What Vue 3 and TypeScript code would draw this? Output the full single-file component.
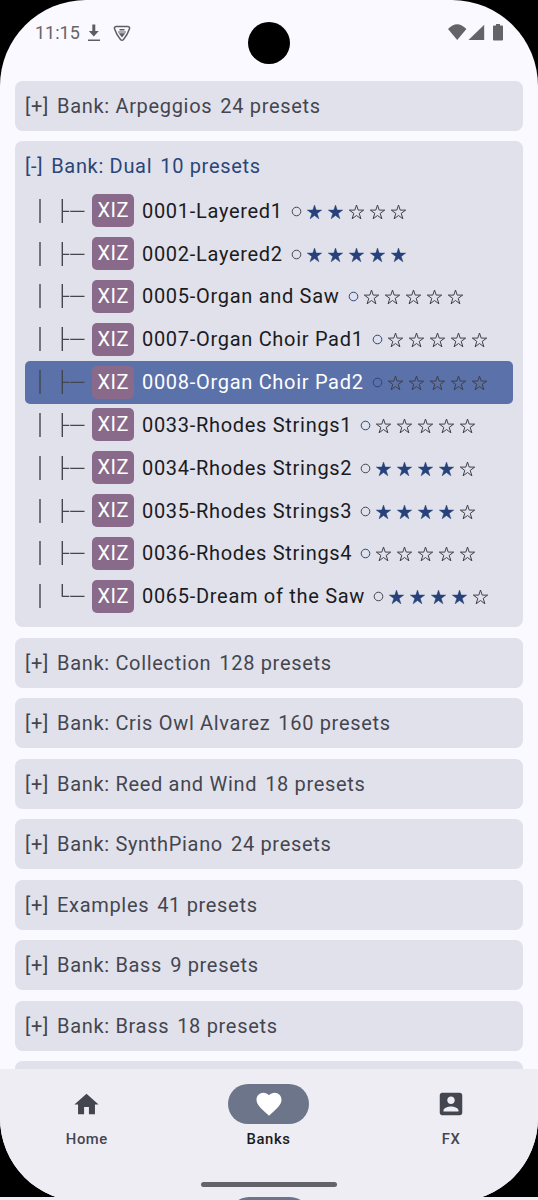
<script setup lang="ts">
interface Preset { name: string; stars: number; blue?: boolean; selected?: boolean }
interface Bank { name: string; count: number; presets?: Preset[] }

const banks: Bank[] = [
  { name: 'Bank: Arpeggios', count: 24 },
  {
    name: 'Bank: Dual', count: 10, presets: [
      { name: '0001-Layered1', stars: 2 },
      { name: '0002-Layered2', stars: 5 },
      { name: '0005-Organ and Saw', stars: 0, blue: true },
      { name: '0007-Organ Choir Pad1', stars: 0, blue: true },
      { name: '0008-Organ Choir Pad2', stars: 0, blue: true, selected: true },
      { name: '0033-Rhodes Strings1', stars: 0, blue: true },
      { name: '0034-Rhodes Strings2', stars: 4 },
      { name: '0035-Rhodes Strings3', stars: 4 },
      { name: '0036-Rhodes Strings4', stars: 0, blue: true },
      { name: '0065-Dream of the Saw', stars: 4 },
    ],
  },
  { name: 'Bank: Collection', count: 128 },
  { name: 'Bank: Cris Owl Alvarez', count: 160 },
  { name: 'Bank: Reed and Wind', count: 18 },
  { name: 'Bank: SynthPiano', count: 24 },
  { name: 'Examples', count: 41 },
  { name: 'Bank: Bass', count: 9 },
  { name: 'Bank: Brass', count: 18 },
]
</script>

<template>
  <div class="stage">
    <div class="phone">
      <header class="status">
        <span class="time">11:15</span>
        <svg class="dl" width="14" height="18" viewBox="0 0 14 18">
          <path d="M5.300 0.500h3v6.500h3.500L6.800 12.500 1.800 7h3.500z" fill="#5e5e62" />
          <path d="M1 16.200h12" stroke="#5e5e62" stroke-width="1.500" />
        </svg>
        <svg class="shield" width="18" height="17" viewBox="0 0 18 17">
          <path d="M3 1.500h12q2.200.3 1.400 2.600Q14.500 10 10.500 14.500q-1.500 1.600-3 0Q3.500 10 1.600 4.100.8 1.800 3 1.500z" fill="none" stroke="#5e5e62" stroke-width="1.500" />
          <path d="M6.500 4h5v1.500h-5zM5 6.500h8v1H5zM5.700 8.300h6.600L9 12.500z" fill="#5e5e62" />
        </svg>
        <svg class="signals" width="56" height="18" viewBox="0 0 56 18">
          <path d="M0 5Q9-4.500 18.400 5L9.200 16z" fill="#646468" />
          <path d="M36.200.8V16H20.500z" fill="#646468" />
          <path d="M48 0h4v1.500h2q1 0 1 1V15.500q0 1-1 1h-8q-1 0-1-1V2.500q0-1 1-1h2z" fill="#646468" />
        </svg>
      </header>
      <div class="camera"></div>

      <main class="list">
        <section v-for="bank in banks" :key="bank.name" class="bank" :class="{ open: bank.presets }">
          <div class="title">
            <span>{{ bank.presets ? '[-]' : '[+]' }}</span>
            <span>{{ bank.name }}</span>
            <span>{{ bank.count }} presets</span>
          </div>
          <div v-if="bank.presets" class="presets">
            <div v-for="(p, i) in bank.presets" :key="p.name" class="preset" :class="{ selected: p.selected }">
              <svg class="tree" width="60" height="26" viewBox="0 0 60 26" fill="none" stroke="#44464f" stroke-width="1.400">
                <path d="M15 1v24" />
                <path :d="i === bank.presets.length - 1 ? 'M37.300 1v12.700' : 'M37.300 1v24'" />
                <path d="M37.300 13.300h7M45.200 13.300h14.300" stroke-width="1.300" />
              </svg>
              <span class="tag">XIZ</span>
              <span class="name">{{ p.name }}</span>
              <svg class="rating" width="118" height="20" viewBox="0 0 118 20">
                <circle cx="5.500" cy="10.500" r="4.300" fill="none" :stroke="p.blue ? '#2b4678' : '#44464f'" stroke-width="1" />
                <path
                  v-for="n in 5" :key="n" :transform="`translate(${2.500 + n * 21}, 11.200)`"
                  d="M0-7.200L1.700-2.100 7.200-2.100 2.700 1.200 4.400 6.600 0 3.300-4.400 6.600-2.700 1.200-7.200-2.100-1.700-2.100z"
                  :fill="n <= p.stars ? '#27427a' : 'none'"
                  :stroke="n <= p.stars ? '#27427a' : '#3f414a'"
                  :stroke-width="n <= p.stars ? 0.500 : 1"
                />
              </svg>
            </div>
          </div>
        </section>
        <section class="bank"></section>
      </main>

      <nav class="nav">
        <div class="item">
          <span class="pill"><svg width="29" height="29" viewBox="0 0 24 24"><path fill="#44464f" d="M10 20v-6h4v6h5v-8h3L12 3 2 12h3v8z" /></svg></span>
          <span>Home</span>
        </div>
        <div class="item active">
          <span class="pill"><svg width="30" height="30" viewBox="0 0 24 24"><path fill="#fff" d="M12 21.350l-1.450-1.320C5.400 15.360 2 12.280 2 8.500 2 5.420 4.420 3 7.500 3c1.740 0 3.410.81 4.500 2.090C13.090 3.810 14.760 3 16.500 3 19.580 3 22 5.420 22 8.500c0 3.780-3.400 6.860-8.550 11.540z" /></svg></span>
          <span>Banks</span>
        </div>
        <div class="item">
          <span class="pill"><svg width="30" height="30" viewBox="0 0 24 24"><path fill="#44464f" d="M3 5v14c0 1.100.89 2 2 2h14c1.100 0 2-.9 2-2V5c0-1.100-.9-2-2-2H5c-1.110 0-2 .9-2 2zm12 4c0 1.660-1.340 3-3 3s-3-1.340-3-3 1.340-3 3-3 3 1.340 3 3zm-9 8c0-2 4-3.100 6-3.100s6 1.100 6 3.100v1H6z" /></svg></span>
          <span>FX</span>
        </div>
        <div class="handle"></div>
      </nav>
    </div>
    <div class="edge"><i></i></div>
  </div>
</template>

<style>
body { margin: 0; }
</style>

<style scoped>
.stage {
  position: relative;
  width: 538px;
  height: 1200px;
  overflow: hidden;
  background: #000;
  font-family: Roboto, "Liberation Sans", sans-serif;
}
.phone {
  position: relative;
  display: flex;
  flex-direction: column;
  height: 1202px;
  border-radius: 86px 86px 84px 84px;
  overflow: hidden;
  background: #faf9ff;
}
.status {
  display: flex;
  flex: none;
  box-sizing: border-box;
  height: 81px;
  padding: 24px 34px 0 35px;
  color: #66666a;
}
.time { width: 51px; font-size: 18px; line-height: 18px; letter-spacing: 0; white-space: nowrap; }
.dl { margin-left: 1px; }
.shield { margin: 1px 0 0 12px; }
.signals { margin-left: auto; }
.camera {
  position: absolute;
  top: 22px;
  left: 248px;
  width: 42px;
  height: 42px;
  border-radius: 50%;
  background: #000;
}
.list {
  flex: 1;
  min-height: 0;
  overflow: hidden;
  padding: 0 15px;
}
.bank {
  box-sizing: border-box;
  height: 50px;
  margin-bottom: 10.470px;
  padding: 0 10px;
  border-radius: 7.500px;
  background: #e1e1eb;
  color: #44464f;
}
.bank.open { height: 486px; }
.title {
  display: flex;
  gap: 8px;
  height: 50px;
  font-size: 20px;
  line-height: 50px;
  letter-spacing: 0.680px;
  white-space: nowrap;
}
.open .title { height: 48px; color: #2b4678; }
.presets { margin-top: -0.200px; }
.preset {
  display: flex;
  align-items: center;
  height: 42.850px;
  border-radius: 5px;
  color: #1a1b21;
}
.selected { background: #5b71a9; color: #fff; }
.tree { flex: none; }
.tag {
  flex: none;
  width: 42px;
  height: 33px;
  margin-left: 7.300px;
  border-radius: 5px;
  background: #8a6a8a;
  color: #fff;
  font-size: 20px;
  line-height: 33px;
  letter-spacing: 0.500px;
  text-align: center;
}
.name {
  margin-left: 7.700px;
  font-size: 20px;
  letter-spacing: 0.700px;
  white-space: nowrap;
}
.rating { flex: none; margin-left: 8px; }
.nav {
  position: relative;
  display: flex;
  flex: none;
  height: 133px;
  background: #eeedf4;
}
.item {
  display: flex;
  flex: 1;
  flex-direction: column;
  align-items: center;
  padding-top: 15px;
  color: #44464f;
  font-size: 14.800px;
  font-weight: 500;
  line-height: 18px;
  letter-spacing: 0.600px;
}
.item:first-child { padding-right: 8px; }
.item:nth-child(2) { padding-right: 1px; }
.item:nth-child(3) { padding-left: 8px; }
.active { color: #1a1b21; }
.pill {
  display: flex;
  align-items: center;
  justify-content: center;
  width: 81px;
  height: 40px;
  margin-bottom: 6px;
  border-radius: 20px;
}
.active .pill { background: #6d758a; }
.handle {
  position: absolute;
  left: 201px;
  top: 113px;
  width: 136px;
  height: 5px;
  border-radius: 3px;
  background: #646468;
}
.edge {
  position: absolute;
  left: 0;
  right: 0;
  bottom: 0;
  height: 3px;
  overflow: hidden;
  background: #eeedf4;
}
.edge i {
  display: block;
  width: 81px;
  height: 40px;
  margin: 0 auto;
  border-radius: 20px;
  background: #6d758a;
}
</style>
